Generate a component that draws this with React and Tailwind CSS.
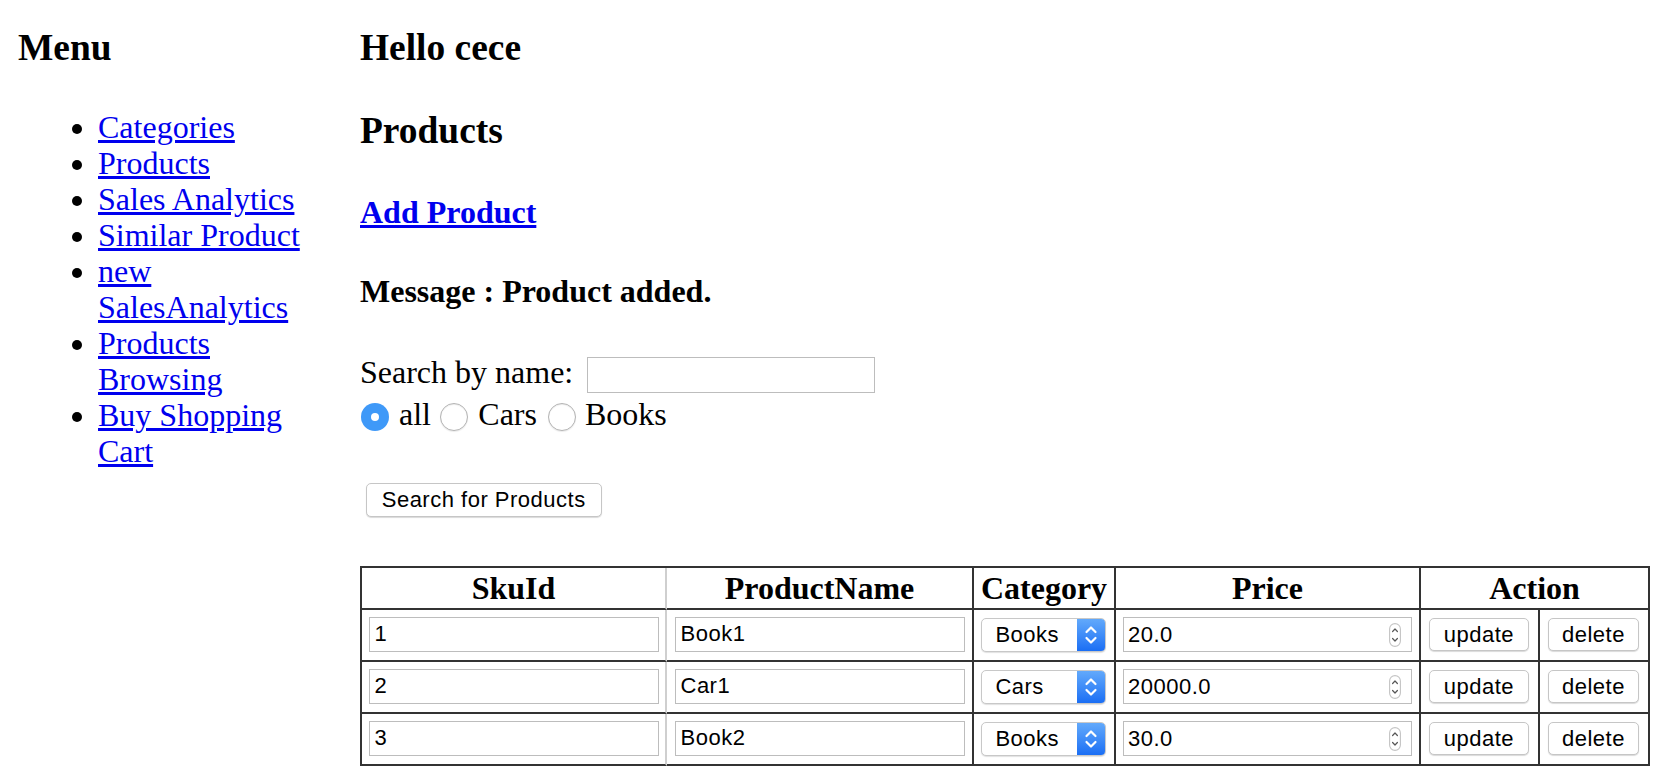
import React from "react";

const menuLinks = [
  "Categories",
  "Products",
  "Sales Analytics",
  "Similar Product",
  "new SalesAnalytics",
  "Products Browsing",
  "Buy Shopping Cart",
];

const products = [
  { sku: "1", name: "Book1", category: "Books", price: "20.0" },
  { sku: "2", name: "Car1", category: "Cars", price: "20000.0" },
  { sku: "3", name: "Book2", category: "Books", price: "30.0" },
];

const ctrl = "font-['Liberation_Sans',Arial,sans-serif] text-[22px] tracking-[0.5px] text-black";

function Radio({ checked, className = "" }) {
  if (checked) {
    return (
      <span className={`mt-[6.8px] flex h-[28px] w-[28px] shrink-0 items-center justify-center rounded-full bg-[#3f99f8] ${className}`}>
        <span className="block h-[8px] w-[8px] rounded-full bg-white" />
      </span>
    );
  }
  return (
    <span
      className={`mt-[6.8px] block h-[28px] w-[28px] shrink-0 rounded-full border border-[#b4b4b4] bg-white shadow-[inset_0_1px_1px_rgba(0,0,0,0.08),0_1px_1px_rgba(0,0,0,0.08)] ${className}`}
    />
  );
}

function Select({ value }) {
  return (
    <div className={`mt-[1.6px] flex h-[34px] w-[125px] overflow-hidden rounded-[5px] border border-[#c8c8c8] bg-white shadow-[0_1px_1px_rgba(0,0,0,0.12)] ${ctrl}`}>
      <span className="flex flex-1 items-center pl-[13px]">{value}</span>
      <span className="flex w-[28px] items-center justify-center bg-gradient-to-b from-[#62a9fb] to-[#1a6ef4]">
        <svg width="14" height="22" viewBox="0 0 14 22" fill="none" stroke="white" strokeWidth="2.2" strokeLinecap="round" strokeLinejoin="round">
          <path d="M2.5 8 L7 3.5 L11.5 8" />
          <path d="M2.5 14 L7 18.5 L11.5 14" />
        </svg>
      </span>
    </div>
  );
}

function PriceInput({ value }) {
  return (
    <div className={`mt-[0.6px] flex h-[35px] w-full items-center justify-between border border-[#bdbdbd] bg-white pl-[4px] pr-[10px] ${ctrl}`}>
      <span>{value}</span>
      <svg width="12" height="24" viewBox="0 0 12 24" fill="none">
        <rect x="0.6" y="0.6" width="10.8" height="22.8" rx="5.4" stroke="#c4c4c4" strokeWidth="1.1" fill="white" />
        <path d="M3.6 8.5 L6 6 L8.4 8.5" stroke="#555" strokeWidth="1.2" strokeLinecap="round" strokeLinejoin="round" />
        <path d="M3.6 15.5 L6 18 L8.4 15.5" stroke="#555" strokeWidth="1.2" strokeLinecap="round" strokeLinejoin="round" />
      </svg>
    </div>
  );
}

function Button({ children, className = "" }) {
  return (
    <button
      type="button"
      className={`flex items-center justify-center rounded-[5px] border border-[#c6c6c6] bg-white shadow-[0_1px_1px_rgba(0,0,0,0.15)] ${ctrl} ${className}`}
    >
      {children}
    </button>
  );
}

export default function App() {
  const cell = "h-[52px] border-b-2 border-b-[#333] align-top pt-[6.7px]";
  const textInput = `block h-[35px] w-full border border-[#bdbdbd] px-[5px] outline-none ${ctrl}`;

  return (
    <div className="flex min-h-screen bg-white font-['Liberation_Serif','Times_New_Roman',serif] text-[32px] leading-[36px] text-black">
      {/* Menu column */}
      <aside className="ml-[18px] w-[307px] shrink-0">
        <h3 className="mt-[26.4px] text-[37.44px] font-bold leading-[44px]">Menu</h3>
        <ul className="mt-[38.8px] list-disc pl-[80px]">
          {menuLinks.map((label) => (
            <li key={label}>
              <a href="#" className="text-[#0000ee] underline">
                {label}
              </a>
            </li>
          ))}
        </ul>
      </aside>

      {/* Main content */}
      <main className="ml-[35px] flex-1">
        <h3 className="mt-[26.4px] text-[37.44px] font-bold leading-[44px]">Hello cece</h3>
        <h3 className="mt-[38.3px] text-[37.44px] font-bold leading-[44px]">Products</h3>
        <h4 className="mt-[41.2px] font-bold">
          <a href="#" className="text-[#0000ee] underline">
            Add Product
          </a>
        </h4>
        <h4 className="mt-[43px] font-bold">Message : Product added.</h4>

        <form className="mt-[45.6px]">
          <div className="flex h-[41.7px] items-start">
            <span>Search by name:</span>
            <input
              type="text"
              className={`ml-[13.6px] mt-[2.8px] h-[35.4px] w-[288px] border border-[#bdbdbd] px-[5px] outline-none ${ctrl}`}
            />
          </div>
          <div className="flex h-[36px] items-start">
            <Radio checked className="ml-[1px]" />
            <span className="ml-[10px]">all</span>
            <Radio className="ml-[9.3px]" />
            <span className="ml-[10px]">Cars</span>
            <Radio className="ml-[11px]" />
            <span className="ml-[9px]">Books</span>
          </div>
          <Button className="ml-[5.7px] mt-[51.1px] h-[33.4px] w-[236px]">Search for Products</Button>
        </form>

        <table className="mt-[49.3px] w-[1290px] table-fixed border-separate border-spacing-0 border-l-2 border-t-2 border-[#333]">
          <colgroup>
            <col className="w-[305px]" />
            <col className="w-[307px]" />
            <col className="w-[142px]" />
            <col className="w-[305px]" />
            <col className="w-[119px]" />
            <col className="w-[110px]" />
          </colgroup>
          <thead>
            <tr>
              <th className="border-b-2 border-r-2 border-b-[#333] border-r-[#cfcfcf] p-[2px] text-center font-bold">SkuId</th>
              <th className="border-b-2 border-r-2 border-b-[#333] border-r-[#333] p-[2px] text-center font-bold">ProductName</th>
              <th className="border-b-2 border-r-2 border-b-[#333] border-r-[#333] p-[2px] text-center font-bold">Category</th>
              <th className="border-b-2 border-r-2 border-b-[#333] border-r-[#333] p-[2px] text-center font-bold">Price</th>
              <th colSpan={2} className="border-b-2 border-r-2 border-b-[#333] border-r-[#333] p-[2px] text-center font-bold">Action</th>
            </tr>
          </thead>
          <tbody>
            {products.map((p) => (
              <tr key={p.sku}>
                <td className={`${cell} border-r-2 border-r-[#cfcfcf] px-[6.5px]`}>
                  <input type="text" defaultValue={p.sku} className={textInput} />
                </td>
                <td className={`${cell} border-r-2 border-r-[#333] px-[7.5px]`}>
                  <input type="text" defaultValue={p.name} className={textInput} />
                </td>
                <td className={`${cell} border-r-2 border-r-[#333] px-[7.4px]`}>
                  <Select value={p.category} />
                </td>
                <td className={`${cell} border-r-2 border-r-[#333] px-[7px]`}>
                  <PriceInput value={p.price} />
                </td>
                <td className={`${cell} border-r-2 border-r-[#333] pl-[8.3px]`}>
                  <Button className="mt-[1.6px] h-[32.7px] w-[99.3px]">update</Button>
                </td>
                <td className={`${cell} border-r-2 border-r-[#333] pl-[8px]`}>
                  <Button className="mt-[1.6px] h-[32.7px] w-[91px]">delete</Button>
                </td>
              </tr>
            ))}
          </tbody>
        </table>
      </main>
    </div>
  );
}
